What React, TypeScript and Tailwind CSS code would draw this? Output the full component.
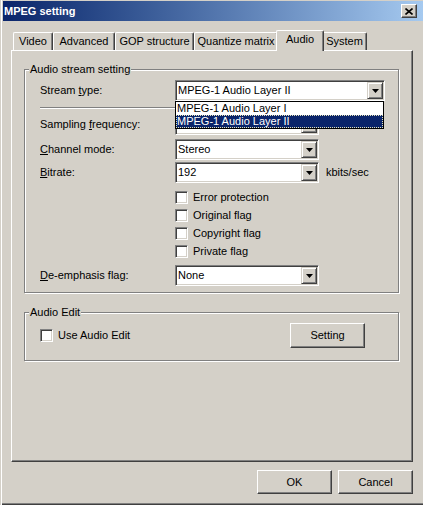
import type { ReactNode } from 'react';

const sunken =
  'border border-t-[#808080] border-l-[#808080] border-r-white border-b-white shadow-[inset_1px_1px_0_#404040,inset_-1px_-1px_0_#d4d0c8]';
const raised =
  'border border-t-white border-l-white border-r-[#404040] border-b-[#404040] shadow-[inset_-1px_-1px_0_#808080]';

const tabs = [
  { label: 'Video', w: 'w-[40px]' },
  { label: 'Advanced', w: 'w-[62px]' },
  { label: 'GOP structure', w: 'w-[79px]' },
  { label: 'Quantize matrix', w: 'w-[84px]' },
  { label: 'Audio', w: 'w-[48px]', active: true },
  { label: 'System', w: 'w-[45px]' },
];

function Arrow() {
  return (
    <svg width="7" height="4" viewBox="0 0 7 4" className="block">
      <path d="M0 0h7L3.5 4z" fill="#000" />
    </svg>
  );
}

function Combo({ value, wide }: { value: string; wide?: boolean }) {
  return (
    <div className={`${wide ? 'w-[210px]' : 'w-[144px]'} h-[21px] bg-white flex items-center ${sunken} p-[1px]`}>
      <span className="flex-1 pl-[1px] leading-[13px] whitespace-nowrap">{value}</span>
      <div className="w-[16px] h-[17px] bg-[#d4d0c8] border border-t-[#d4d0c8] border-l-[#d4d0c8] border-r-[#404040] border-b-[#404040] shadow-[inset_1px_1px_0_#fff,inset_-1px_-1px_0_#808080] flex items-center justify-center">
        <Arrow />
      </div>
    </div>
  );
}

function Row({ label, children }: { label: ReactNode; children: ReactNode }) {
  return (
    <div className="flex items-center h-[21px]">
      <div className="w-[135px] leading-[13px] whitespace-nowrap">{label}</div>
      {children}
    </div>
  );
}

function CheckBox() {
  return <div className={`w-[13px] h-[13px] bg-white ${sunken}`} />;
}

function Check({ label }: { label: string }) {
  return (
    <div className="flex items-center h-[18px] pl-[135px]">
      <CheckBox />
      <span className="ml-[5px] leading-[13px]">{label}</span>
    </div>
  );
}

function Group({ title, className, children }: { title: string; className: string; children: ReactNode }) {
  return (
    <div className={`relative w-[375px] ml-[12px] border border-[#808080] shadow-[1px_1px_0_#fff,inset_1px_1px_0_#fff] ${className}`}>
      <span className="absolute -top-[7px] left-[4px] px-[1px] bg-[#d4d0c8] leading-[13px]">{title}</span>
      {children}
    </div>
  );
}

function Button({ children, className = '' }: { children: ReactNode; className?: string }) {
  return (
    <div className={`w-[75px] flex items-center justify-center bg-[#d4d0c8] ${raised} ${className}`}>
      {children}
    </div>
  );
}

export default function App() {
  return (
    <div className="w-[423px] h-[505px] overflow-hidden bg-[#d4d0c8] font-['Liberation_Sans',Arial,sans-serif] text-[11px] text-black">
      <div className="w-[426px] h-[507px] -mt-[2px] p-[3px] flex flex-col bg-[#d4d0c8] shadow-[inset_1px_1px_0_#d4d0c8,inset_2px_2px_0_#fff,inset_-1px_-1px_0_#404040,inset_-2px_-2px_0_#808080]">
        {/* title bar */}
        <div className="h-[20px] flex items-center bg-gradient-to-r from-[#0a246a] to-[#a6caf0] pl-[1px] pr-[6px]">
          <span className="flex-1 font-bold text-white leading-[13px]">MPEG setting</span>
          <div className={`w-[16px] h-[14px] bg-[#d4d0c8] ${raised} flex items-center justify-center`}>
            <svg width="8" height="7" viewBox="0 0 8 7">
              <path d="M0.5 0.5l7 6M7.5 0.5l-7 6" stroke="#000" strokeWidth="1.6" />
            </svg>
          </div>
        </div>

        {/* tabs */}
        <div className="ml-[8px] mt-[9px] w-[402px]">
          <div className="flex items-end h-[20px] pl-[2px]">
            {tabs.map((t) =>
              t.active ? (
                <div
                  key={t.label}
                  className={`${t.w} -mx-[2px] h-[21px] -mb-[1px] relative z-10 bg-[#d4d0c8] border-t border-l border-white border-r border-r-[#404040] shadow-[inset_-1px_0_0_#808080] flex items-center justify-center pb-[3px] rounded-t-[2px]`}
                >
                  {t.label}
                </div>
              ) : (
                <div
                  key={t.label}
                  className={`${t.w} h-[18px] border-t border-l border-white border-r border-r-[#404040] shadow-[inset_-1px_0_0_#808080] flex items-center justify-center rounded-t-[2px]`}
                >
                  {t.label}
                </div>
              ),
            )}
          </div>

          {/* panel */}
          <div className="h-[412px] border border-t-white border-l-white border-r-[#404040] border-b-[#404040] shadow-[inset_-1px_-1px_0_#808080]">
            <Group title="Audio stream setting" className="mt-[18px] h-[224px] pl-[15px]">
              <div className="mt-[10px] relative">
                <Row label={<>Stream <span className="underline">t</span>ype:</>}>
                  <Combo value="MPEG-1 Audio Layer II" wide />
                </Row>
                <div className="absolute left-[135px] top-[21px] z-20 w-[209px] bg-white border border-black">
                  <div className="h-[13px] pl-[1px] leading-[13px] whitespace-nowrap">MPEG-1 Audio Layer I</div>
                  <div className="h-[13px] bg-[#0a246a] text-white border border-dotted border-[#e8e4b8] leading-[11px] whitespace-nowrap">
                    MPEG-1 Audio Layer II
                  </div>
                </div>
              </div>
              <div className="mt-[6px] mr-[60px] h-[2px] border-t border-[#808080] border-b border-b-white" />
              <div className="mt-[5px]">
                <Row label={<>Sampling <span className="underline">f</span>requency:</>}>
                  <Combo value="" />
                </Row>
              </div>
              <div className="mt-[4px]">
                <Row label={<><span className="underline">C</span>hannel mode:</>}>
                  <Combo value="Stereo" />
                </Row>
              </div>
              <div className="mt-[2px]">
                <Row label={<><span className="underline">B</span>itrate:</>}>
                  <Combo value="192" />
                  <span className="ml-[7px] leading-[13px]">kbits/sec</span>
                </Row>
              </div>
              <div className="mt-[5px]">
                <Check label="Error protection" />
                <Check label="Original flag" />
                <Check label="Copyright flag" />
                <Check label="Private flag" />
              </div>
              <div className="mt-[5px]">
                <Row label={<><span className="underline">D</span>e-emphasis flag:</>}>
                  <Combo value="None" />
                </Row>
              </div>
            </Group>

            <Group title="Audio Edit" className="mt-[19px] h-[49px] pl-[15px] pr-[33px]">
              <div className="mt-[10px] flex items-center">
                <CheckBox />
                <span className="ml-[5px] flex-1 leading-[13px]">Use Audio Edit</span>
                <Button className="h-[25px]">Setting</Button>
              </div>
            </Group>
          </div>

          {/* dialog buttons */}
          <div className="mt-[8px] flex justify-end gap-[6px]">
            <Button className="h-[24px]">OK</Button>
            <Button className="h-[24px]">Cancel</Button>
          </div>
        </div>
      </div>
    </div>
  );
}
